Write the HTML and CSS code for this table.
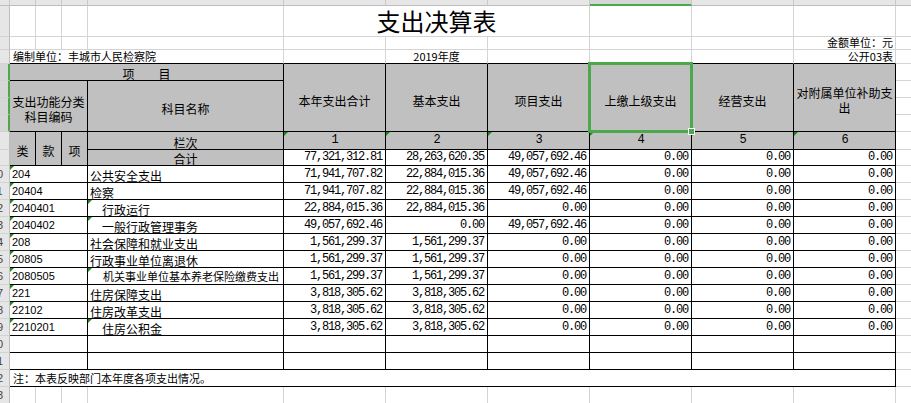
FILE: index.html
```html
<!DOCTYPE html>
<html lang="zh-CN">
<head>
<meta charset="utf-8">
<title>支出决算表</title>
<link rel="stylesheet" href="styles.css">
</head>
<body>
<div class="sheet">
  <!-- column header strip -->
  <div class="ch corner"></div>
  <div class="ch"><span>A</span></div>
  <div class="ch"><span>B</span></div>
  <div class="ch"><span>C</span></div>
  <div class="ch"><span>D</span></div>
  <div class="ch"><span>E</span></div>
  <div class="ch"><span>F</span></div>
  <div class="ch"><span>G</span></div>
  <div class="ch sel"><span>H</span></div>
  <div class="ch"><span>I</span></div>
  <div class="ch"><span>J</span></div>
  <div class="ch chk"><span>K</span></div>

  <!-- row 1 -->
  <div class="rh"><span>1</span></div>
  <div class="c"></div><div class="c"></div><div class="c"></div><div class="c"></div>
  <div class="c s3 title">支出决算表</div>
  <div class="c"></div><div class="c"></div><div class="c"></div>
  <div class="c k"></div>

  <!-- row 2 -->
  <div class="rh"><span>2</span></div>
  <div class="c"></div><div class="c"></div><div class="c"></div><div class="c"></div>
  <div class="c"></div><div class="c"></div><div class="c"></div><div class="c"></div><div class="c"></div>
  <div class="c small rt">金额单位：元</div>
  <div class="c k"></div>

  <!-- row 3 -->
  <div class="rh"><span>3</span></div>
  <div class="c s4 small bt lft">编制单位：丰城市人民检察院</div>
  <div class="c bt"></div>
  <div class="c bt small ctr">2019年度</div>
  <div class="c bt"></div><div class="c bt"></div><div class="c bt"></div>
  <div class="c bt small rt">公开03表</div>
  <div class="c k"></div>

  <!-- row 4 -->
  <div class="rh sel"><span>4</span></div>
  <div class="c t g s4 ctr">项　　目</div>
  <div class="c t g r4 head">本年支出合计</div>
  <div class="c t g r4 head">基本支出</div>
  <div class="c t g r4 head">项目支出</div>
  <div class="c t g r4 head">上缴上级支出</div>
  <div class="c t g r4 head">经营支出</div>
  <div class="c t g r4 head">对附属单位补助支出</div>
  <div class="c k"></div>

  <!-- rows 5-7 -->
  <div class="rh sel"><span>5</span></div>
  <div class="c t g s3 r3 head">支出功能分类<br>科目编码</div>
  <div class="c t g r3 head">科目名称</div>
  <div class="c k"></div>
  <div class="rh sel"><span>6</span></div>
  <div class="c k"></div>
  <div class="rh sel"><span>7</span></div>
  <div class="c k"></div>

  <!-- row 8 -->
  <div class="rh"><span>8</span></div>
  <div class="c t g r2 head kind">类</div>
  <div class="c t g r2 head kind">款</div>
  <div class="c t g r2 head kind">项</div>
  <div class="c t g ctr">栏次</div>
  <div class="c t g ctr num tri">1</div>
  <div class="c t g ctr num tri">2</div>
  <div class="c t g ctr num tri">3</div>
  <div class="c t g ctr num tri">4</div>
  <div class="c t g ctr num tri">5</div>
  <div class="c t g ctr num tri">6</div>
  <div class="c k"></div>

  <!-- row 9 -->
  <div class="rh"><span>9</span></div>
  <div class="c t g ctr">合计</div>
  <div class="c t num">77,321,312.81</div>
  <div class="c t num">28,263,620.35</div>
  <div class="c t num">49,057,692.46</div>
  <div class="c t num">0.00</div>
  <div class="c t num">0.00</div>
  <div class="c t num">0.00</div>
  <div class="c k"></div>

  <!-- row 10 -->
  <div class="rh"><span>10</span></div>
  <div class="c t s3 code tri">204</div>
  <div class="c t name">公共安全支出</div>
  <div class="c t num">71,941,707.82</div>
  <div class="c t num">22,884,015.36</div>
  <div class="c t num">49,057,692.46</div>
  <div class="c t num">0.00</div>
  <div class="c t num">0.00</div>
  <div class="c t num">0.00</div>
  <div class="c k"></div>

  <!-- row 11 -->
  <div class="rh"><span>11</span></div>
  <div class="c t s3 code tri">20404</div>
  <div class="c t name">检察</div>
  <div class="c t num">71,941,707.82</div>
  <div class="c t num">22,884,015.36</div>
  <div class="c t num">49,057,692.46</div>
  <div class="c t num">0.00</div>
  <div class="c t num">0.00</div>
  <div class="c t num">0.00</div>
  <div class="c k"></div>

  <!-- row 12 -->
  <div class="rh"><span>12</span></div>
  <div class="c t s3 code tri">2040401</div>
  <div class="c t name ind tri">行政运行</div>
  <div class="c t num">22,884,015.36</div>
  <div class="c t num">22,884,015.36</div>
  <div class="c t num">0.00</div>
  <div class="c t num">0.00</div>
  <div class="c t num">0.00</div>
  <div class="c t num">0.00</div>
  <div class="c k"></div>

  <!-- row 13 -->
  <div class="rh"><span>13</span></div>
  <div class="c t s3 code tri">2040402</div>
  <div class="c t name ind tri">一般行政管理事务</div>
  <div class="c t num">49,057,692.46</div>
  <div class="c t num">0.00</div>
  <div class="c t num">49,057,692.46</div>
  <div class="c t num">0.00</div>
  <div class="c t num">0.00</div>
  <div class="c t num">0.00</div>
  <div class="c k"></div>

  <!-- row 14 -->
  <div class="rh"><span>14</span></div>
  <div class="c t s3 code tri">208</div>
  <div class="c t name">社会保障和就业支出</div>
  <div class="c t num">1,561,299.37</div>
  <div class="c t num">1,561,299.37</div>
  <div class="c t num">0.00</div>
  <div class="c t num">0.00</div>
  <div class="c t num">0.00</div>
  <div class="c t num">0.00</div>
  <div class="c k"></div>

  <!-- row 15 -->
  <div class="rh"><span>15</span></div>
  <div class="c t s3 code tri">20805</div>
  <div class="c t name">行政事业单位离退休</div>
  <div class="c t num">1,561,299.37</div>
  <div class="c t num">1,561,299.37</div>
  <div class="c t num">0.00</div>
  <div class="c t num">0.00</div>
  <div class="c t num">0.00</div>
  <div class="c t num">0.00</div>
  <div class="c k"></div>

  <!-- row 16 -->
  <div class="rh"><span>16</span></div>
  <div class="c t s3 code tri">2080505</div>
  <div class="c t name ind tri shrink">机关事业单位基本养老保险缴费支出</div>
  <div class="c t num">1,561,299.37</div>
  <div class="c t num">1,561,299.37</div>
  <div class="c t num">0.00</div>
  <div class="c t num">0.00</div>
  <div class="c t num">0.00</div>
  <div class="c t num">0.00</div>
  <div class="c k"></div>

  <!-- row 17 -->
  <div class="rh"><span>17</span></div>
  <div class="c t s3 code tri">221</div>
  <div class="c t name">住房保障支出</div>
  <div class="c t num">3,818,305.62</div>
  <div class="c t num">3,818,305.62</div>
  <div class="c t num">0.00</div>
  <div class="c t num">0.00</div>
  <div class="c t num">0.00</div>
  <div class="c t num">0.00</div>
  <div class="c k"></div>

  <!-- row 18 -->
  <div class="rh"><span>18</span></div>
  <div class="c t s3 code tri">22102</div>
  <div class="c t name">住房改革支出</div>
  <div class="c t num">3,818,305.62</div>
  <div class="c t num">3,818,305.62</div>
  <div class="c t num">0.00</div>
  <div class="c t num">0.00</div>
  <div class="c t num">0.00</div>
  <div class="c t num">0.00</div>
  <div class="c k"></div>

  <!-- row 19 -->
  <div class="rh"><span>19</span></div>
  <div class="c t s3 code tri">2210201</div>
  <div class="c t name ind tri">住房公积金</div>
  <div class="c t num">3,818,305.62</div>
  <div class="c t num">3,818,305.62</div>
  <div class="c t num">0.00</div>
  <div class="c t num">0.00</div>
  <div class="c t num">0.00</div>
  <div class="c t num">0.00</div>
  <div class="c k"></div>

  <!-- rows 20-21 -->
  <div class="rh"><span>20</span></div>
  <div class="c t s3"></div>
  <div class="c t"></div>
  <div class="c t"></div><div class="c t"></div><div class="c t"></div>
  <div class="c t"></div><div class="c t"></div><div class="c t"></div>
  <div class="c k"></div>

  <div class="rh"><span>21</span></div>
  <div class="c t s3"></div>
  <div class="c t"></div>
  <div class="c t"></div><div class="c t"></div><div class="c t"></div>
  <div class="c t"></div><div class="c t"></div><div class="c t"></div>
  <div class="c k"></div>

  <!-- row 22 note -->
  <div class="rh"><span>22</span></div>
  <div class="c t s10 small lft note">注：本表反映部门本年度各项支出情况。</div>
  <div class="c k"></div>

  <!-- row 23 -->
  <div class="rh"><span>23</span></div>
  <div class="c"></div><div class="c"></div><div class="c"></div><div class="c"></div>
  <div class="c"></div><div class="c"></div><div class="c"></div>
  <div class="c"></div><div class="c"></div><div class="c"></div>
  <div class="c k"></div>

  <!-- selection overlay on H4 -->
  <div class="selbox"></div>
  <div class="handle"></div>
</div>
</body>
</html>
```

FILE: styles.css
```css
* { box-sizing: border-box; margin: 0; padding: 0; }

html, body {
  width: 911px;
  height: 403px;
  overflow: hidden;
  background: #fff;
}

body {
  font-family: "Noto Sans CJK SC", "Noto Sans", sans-serif;
  font-size: 12px;
  color: #000;
}

.sheet {
  position: relative;
  display: grid;
  grid-template-columns: 10px 26px 26px 26px 196px repeat(6, 102px) 15px;
  grid-template-rows: 6px 31px 13px 14px 17px 17px 17px 17px 18px 16px repeat(14, 17px);
}

/* column header strip */
.ch {
  background: #e6e6e6;
  border-right: 1px solid #cacaca;
  border-bottom: 1px solid #bdbdbd;
  overflow: hidden;
}
.ch span {
  display: block;
  margin-top: -14px;
  text-align: center;
  font: 11px/20px "Liberation Sans", sans-serif;
  color: #444;
}
.ch.sel {
  border-bottom: 2px solid #4ba84b;
  background: #d6d6d6;
}
.ch.sel span { color: #217346; }
.chk { border-right: none; }

/* row headers */
.rh {
  grid-column: 1;
  background: #e6e6e6;
  border-right: 1px solid #bdbdbd;
  border-bottom: 1px solid #d2d2d2;
  overflow: hidden;
  display: flex;
  align-items: center;
}
.rh span {
  display: block;
  flex: none;
  width: 26px;
  margin-left: -16px;
  text-align: center;
  font: 11px/12px "Liberation Sans", sans-serif;
  color: #444;
}
.rh.sel {
  border-right: 2px solid #4ba84b;
  background: #d6d6d6;
}

/* cells */
.c {
  position: relative;
  min-width: 0;
  border-right: 1px solid #d4d4d4;
  border-bottom: 1px solid #d4d4d4;
  overflow: hidden;
  white-space: nowrap;
  display: flex;
  align-items: flex-end;
  line-height: 12px;
}
.k { grid-column: 12; border-right: none; }

.t {
  border-right-color: #000;
  border-bottom-color: #000;
  background: #fff;
}
.g { background: #c0c0c0; }
.bt { border-bottom-color: #000; }

.s3 { grid-column: span 3; }
.s4 { grid-column: span 4; }
.s10 { grid-column: span 10; }
.r2 { grid-row: span 2; }
.r3 { grid-row: span 3; }
.r4 { grid-row: span 4; }

.ctr { justify-content: center; text-align: center; }
.rt { justify-content: flex-end; padding-right: 2px; }
.lft { padding-left: 3px; }

.small { font-size: 11px; line-height: 11px; padding-bottom: 1px; }

.title {
  justify-content: center;
  font-size: 24px;
  line-height: 24px;
  padding-bottom: 3px;
}

.head {
  white-space: normal;
  text-align: center;
  justify-content: center;
  align-items: center;
  padding: 5px 2px 0;
  line-height: 15px;
}
.kind { padding-top: 3px; }

.num {
  justify-content: flex-end;
  padding-right: 3px;
  padding-bottom: 2px;
  font-family: "Liberation Mono", "DejaVu Sans Mono", monospace;
  font-size: 12px;
  letter-spacing: -1.2px;
}
.num.ctr { justify-content: center; padding-right: 0; padding-bottom: 3px; }

.code {
  padding-left: 2px;
  padding-bottom: 2px;
  font-family: "Liberation Sans", sans-serif;
  font-size: 11px;
}

.name { padding-left: 2px; }
.ind { padding-left: 14px; }
.shrink { font-size: 11px; padding-left: 15px; padding-bottom: 2px; }

.note { padding-bottom: 2px; }

/* green error-indicator triangles */
.tri::before {
  content: "";
  position: absolute;
  left: 0;
  top: 0;
  width: 0;
  height: 0;
  border-top: 4px solid #1a8a1a;
  border-right: 4px solid transparent;
}

/* selection overlay */
.selbox {
  position: absolute;
  left: 588px;
  top: 62px;
  width: 105px;
  height: 71px;
  border: 3px solid #4ba84b;
  pointer-events: none;
}
.handle {
  position: absolute;
  left: 688px;
  top: 128px;
  width: 7px;
  height: 7px;
  background: #4ba84b;
  border: 1px solid #fff;
}
```
